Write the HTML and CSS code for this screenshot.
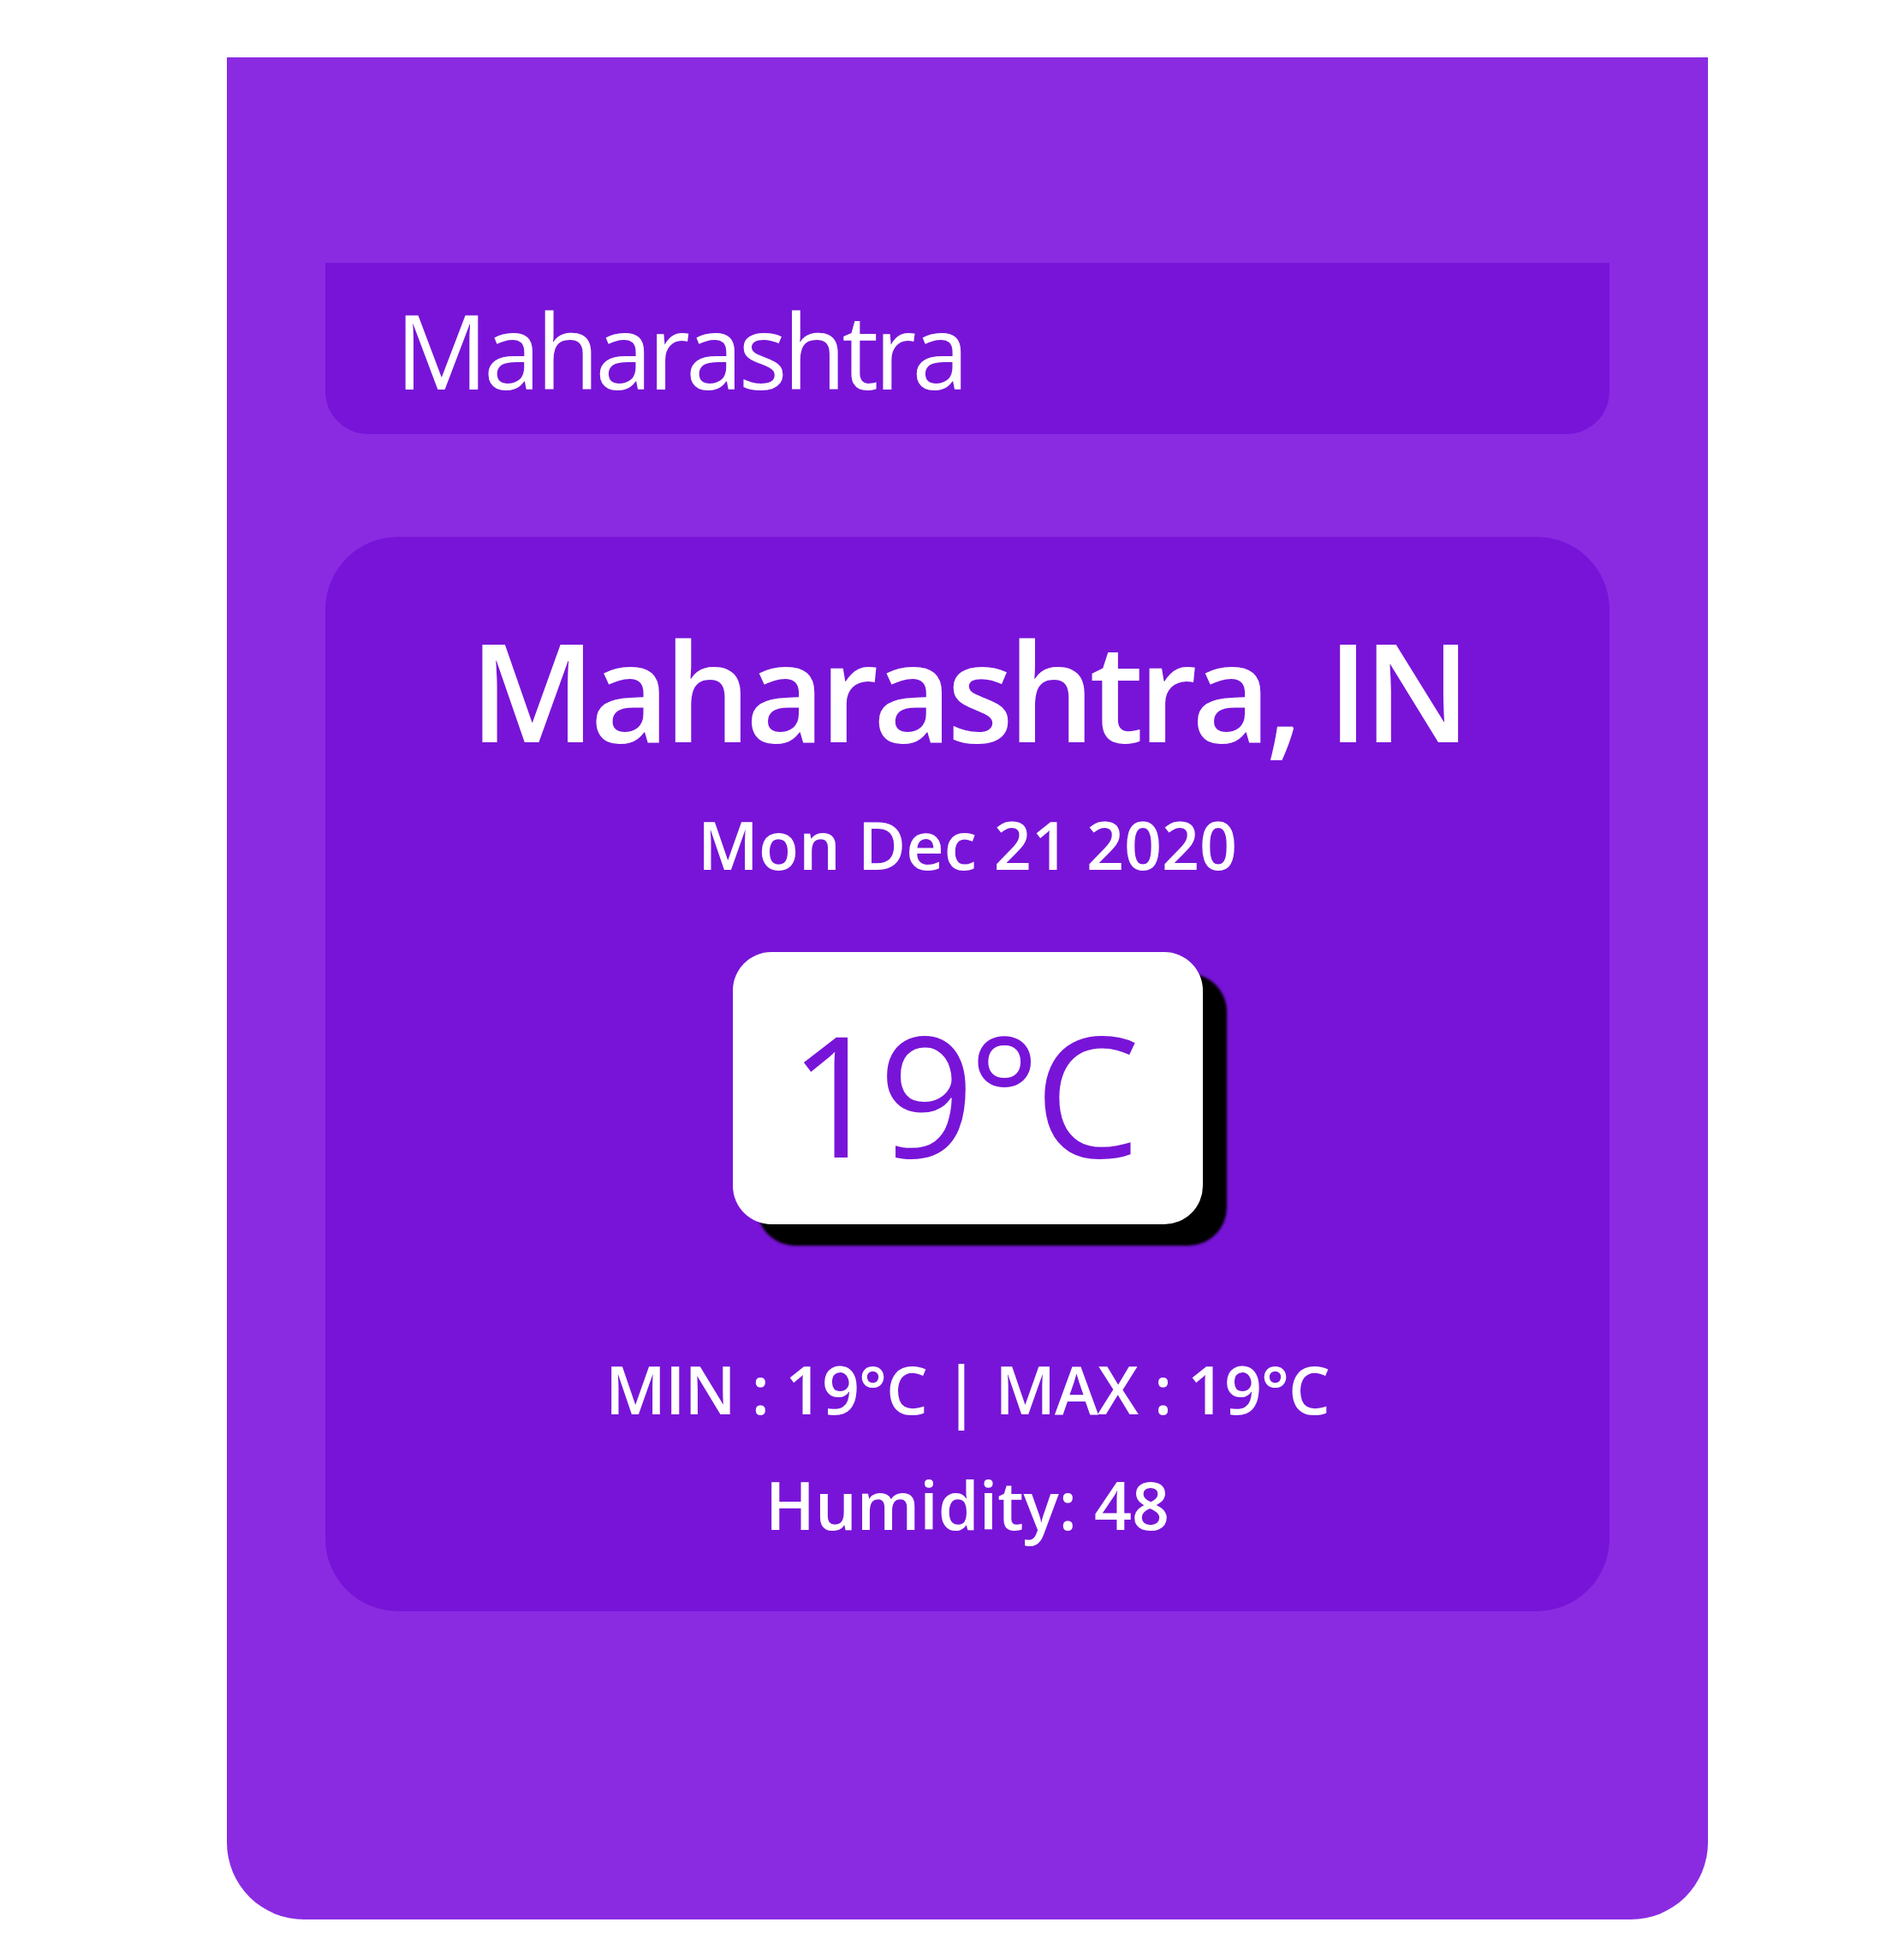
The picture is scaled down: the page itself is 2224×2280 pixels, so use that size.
FILE: index.html
```html
<!DOCTYPE html>
<html lang="en">
<head>
<meta charset="utf-8">
<title>Weather</title>
<link rel="stylesheet" href="styles.css">
</head>
<body>
<main class="page">
  <section class="app">
    <div class="search">
      <input class="search-input" type="text" value="Maharashtra" aria-label="City">
    </div>
    <div class="weather">
      <h1 class="city">Maharashtra, IN</h1>
      <p class="date">Mon Dec 21 2020</p>
      <div class="temp">19°C</div>
      <p class="range">MIN : 19°C | MAX : 19°C</p>
      <p class="humidity">Humidity: 48</p>
    </div>
  </section>
</main>
</body>
</html>
```
FILE: styles.css
```css
* { box-sizing: border-box; }

html, body {
  margin: 0;
  padding: 0;
  background: #ffffff;
}

body {
  font-family: "Open Sans", "Noto Sans", "Liberation Sans", sans-serif;
  color: #ffffff;
}

.page {
  padding: 67px 0 0 265px;
}

.app {
  width: 1730px;
  height: 2175px;
  background: #8a2be2;
  border-radius: 0 0 90px 90px;
  padding: 240px 115px 0;
  display: flex;
  flex-direction: column;
}

.search {
  height: 200px;
  background: #7814d8;
  border-radius: 0 0 50px 50px;
  display: flex;
}

.search-input {
  width: 100%;
  height: 200px;
  border: 0;
  outline: none;
  background: transparent;
  color: #ffffff;
  font-family: inherit;
  font-size: 120px;
  letter-spacing: -5px;
  line-height: 200px;
  padding: 3px 0 0 82px;
  margin: 0;
}

.weather {
  margin-top: 120px;
  height: 1255px;
  background: #7814d8;
  border-radius: 85px;
  padding-top: 82px;
  display: flex;
  flex-direction: column;
  align-items: center;
  text-align: center;
}

.city {
  margin: 0;
  font-size: 160px;
  letter-spacing: -6.5px;
  line-height: 192px;
  font-weight: 600;
}

.date {
  margin: 42px 0 0;
  font-size: 77px;
  line-height: 88px;
  font-weight: 600;
}

.temp {
  margin-top: 81px;
  width: 549px;
  height: 318px;
  background: #ffffff;
  color: #7814d8;
  border-radius: 45px;
  box-shadow: 28px 25px 3px #000000;
  font-size: 196px;
  letter-spacing: -7px;
  line-height: 318px;
  padding: 5px 14px 0 0;
  font-weight: 400;
}

.range,
.humidity {
  margin: 0;
  font-size: 77px;
  line-height: 135px;
  font-weight: 600;
}

.range {
  margin-top: 125px;
  letter-spacing: -1px;
}
```
